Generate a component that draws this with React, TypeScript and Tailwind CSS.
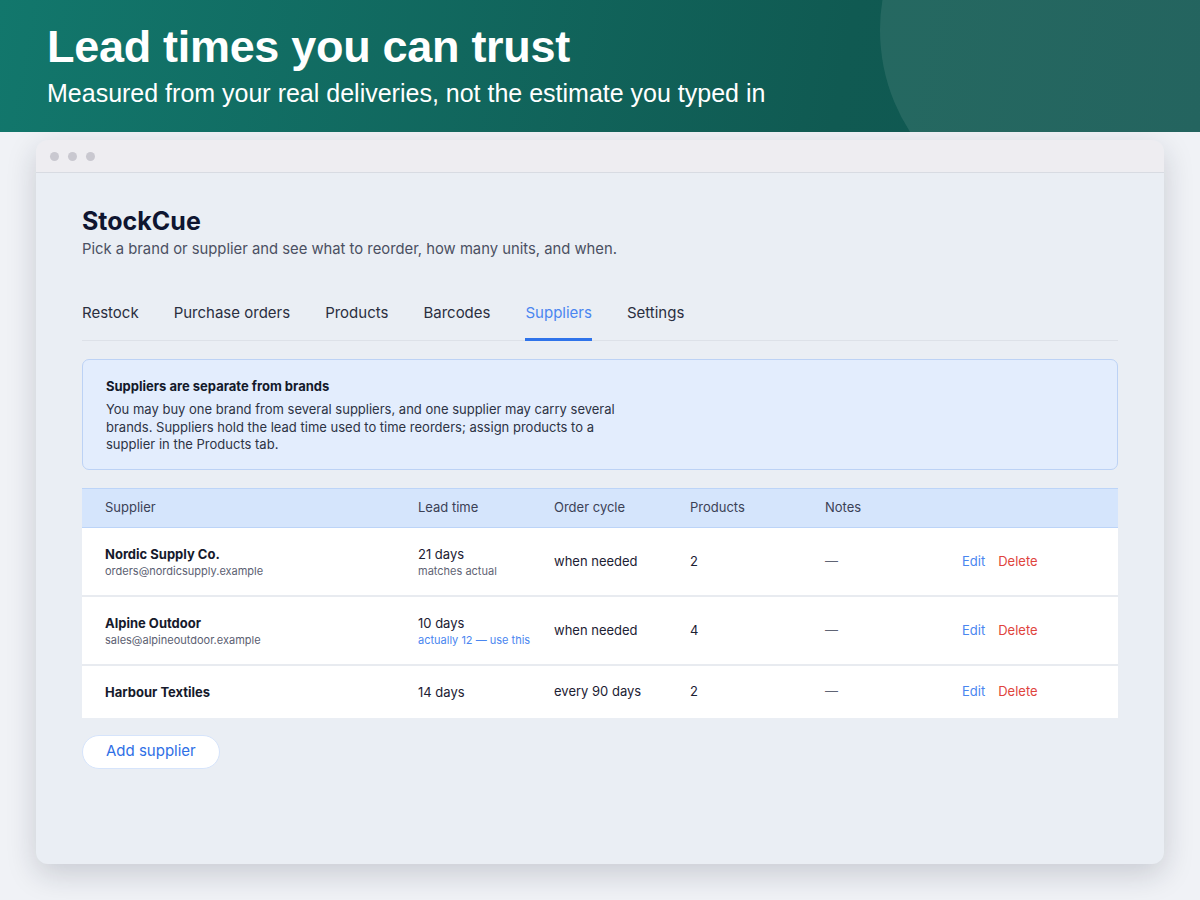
const tabs = ["Restock", "Purchase orders", "Products", "Barcodes", "Suppliers", "Settings"];

type Supplier = {
  name: string;
  email?: string;
  lead: string;
  leadNote?: { text: string; tone: "muted" | "link" };
  cycle: string;
  products: number;
};

const suppliers: Supplier[] = [
  {
    name: "Nordic Supply Co.",
    email: "orders@nordicsupply.example",
    lead: "21 days",
    leadNote: { text: "matches actual", tone: "muted" },
    cycle: "when needed",
    products: 2,
  },
  {
    name: "Alpine Outdoor",
    email: "sales@alpineoutdoor.example",
    lead: "10 days",
    leadNote: { text: "actually 12 — use this", tone: "link" },
    cycle: "when needed",
    products: 4,
  },
  {
    name: "Harbour Textiles",
    lead: "14 days",
    cycle: "every 90 days",
    products: 2,
  },
];

const cols = "grid grid-cols-[313px_136px_136px_135px_137px_1fr]";

export default function App() {
  return (
    <div className="h-[900px] w-[1200px] overflow-hidden bg-[#f0f2f6] font-['Inter','Noto_Sans',sans-serif]">
      {/* hero band */}
      <div className="relative h-[132px] overflow-hidden bg-[linear-gradient(100deg,#12776c_0%,#105a52_70%,#0f5550_100%)] px-[47px] pt-[21px]">
        <div className="absolute left-[880px] top-[-158px] h-[376px] w-[376px] rounded-full bg-white/[0.09]" />
        <h1 className="relative font-['Liberation_Sans',Arial,sans-serif] text-[45px] font-bold leading-[52px] tracking-[-0.3px] text-white">
          Lead times you can trust
        </h1>
        <p className="relative mt-[5px] font-['Liberation_Sans',Arial,sans-serif] text-[25px] leading-[30px] text-white">
          Measured from your real deliveries, not the estimate you typed in
        </p>
      </div>

      {/* app window */}
      <div className="mx-[36px] mt-[8px] h-[724px] overflow-hidden rounded-[12px] bg-[#eaeef4] shadow-[0_10px_30px_rgba(20,30,50,0.18)]">
        <div className="flex h-[33px] items-center gap-[9px] border-b border-[#d8dbe2] bg-[#eeedf1] pl-[14px]">
          <span className="h-[9px] w-[9px] rounded-full bg-[#c9c8d0]" />
          <span className="h-[9px] w-[9px] rounded-full bg-[#c9c8d0]" />
          <span className="h-[9px] w-[9px] rounded-full bg-[#c9c8d0]" />
        </div>

        <div className="px-[46px] pt-[31px]">
          <h2 className="text-[25px] font-bold leading-[34px] text-[#0f1530]">StockCue</h2>
          <p className="mt-[1px] text-[14.8px] leading-[20px] text-[#4b5062]">
            Pick a brand or supplier and see what to reorder, how many units, and when.
          </p>

          <div className="mt-[44px] flex gap-[35px] border-b border-[#dde1e8]">
            {tabs.map((t) => (
              <div
                key={t}
                className={
                  t === "Suppliers"
                    ? "-mb-px border-b-[3px] border-[#2f73ea] pb-[15px] text-[15px] leading-[20px] text-[#4a86f0]"
                    : "-mb-px border-b-[3px] border-transparent pb-[15px] text-[15px] leading-[20px] text-[#2a2f3f]"
                }
              >
                {t}
              </div>
            ))}
          </div>

          <div className="mt-[18px] rounded-[7px] border border-[#bcd2f5] bg-[#e3edfd] px-[23px] pb-[15px] pt-[17px]">
            <div className="text-[13px] font-bold leading-[18px] text-[#14192b]">Suppliers are separate from brands</div>
            <p className="mt-[6px] max-w-[520px] text-[13px] leading-[17.5px] text-[#2d3344]">
              You may buy one brand from several suppliers, and one supplier may carry several brands. Suppliers hold the
              lead time used to time reorders; assign products to a supplier in the Products tab.
            </p>
          </div>

          <div className="mt-[18px]">
            <div className={`${cols} h-[40px] items-center border-y border-[#bcd4f8] bg-[#d5e5fc] text-[13px] text-[#3b4156]`}>
              <div className="pl-[23px]">Supplier</div>
              <div className="pl-[23px]">Lead time</div>
              <div className="pl-[23px]">Order cycle</div>
              <div className="pl-[23px]">Products</div>
              <div className="pl-[23px]">Notes</div>
              <div />
            </div>
            {suppliers.map((s) => (
              <div
                key={s.name}
                className={`${cols} ${s.email ? "h-[69px] pt-[1px]" : "h-[52px]"} items-center border-b-2 border-[#e8ebf0] bg-white text-[13px] text-[#1c2133] last:border-b-0`}
              >
                <div className="pl-[23px]">
                  <div className="font-bold leading-[18px] text-[#161a2c]">{s.name}</div>
                  {s.email && <div className="text-[11px] leading-[16px] text-[#5b6072]">{s.email}</div>}
                </div>
                <div className="pl-[23px]">
                  <div className="leading-[18px]">{s.lead}</div>
                  {s.leadNote && (
                    <div
                      className={
                        s.leadNote.tone === "link"
                          ? "text-[11px] leading-[16px] text-[#4a86f0]"
                          : "text-[11px] leading-[16px] text-[#5f6474]"
                      }
                    >
                      {s.leadNote.text}
                    </div>
                  )}
                </div>
                <div className="pl-[23px]">{s.cycle}</div>
                <div className="pl-[23px]">{s.products}</div>
                <div className="pl-[23px] text-[#5f6474]">—</div>
                <div className="flex gap-[13px] pl-[23px]">
                  <span className="text-[#4a86f0]">Edit</span>
                  <span className="text-[#e0443c]">Delete</span>
                </div>
              </div>
            ))}
          </div>

          <button
            type="button"
            className="mt-[17px] h-[34px] rounded-full border border-[#d6e4fb] bg-white px-[23px] text-[15px] text-[#2f6fe6]"
          >
            Add supplier
          </button>
        </div>
      </div>
    </div>
  );
}
